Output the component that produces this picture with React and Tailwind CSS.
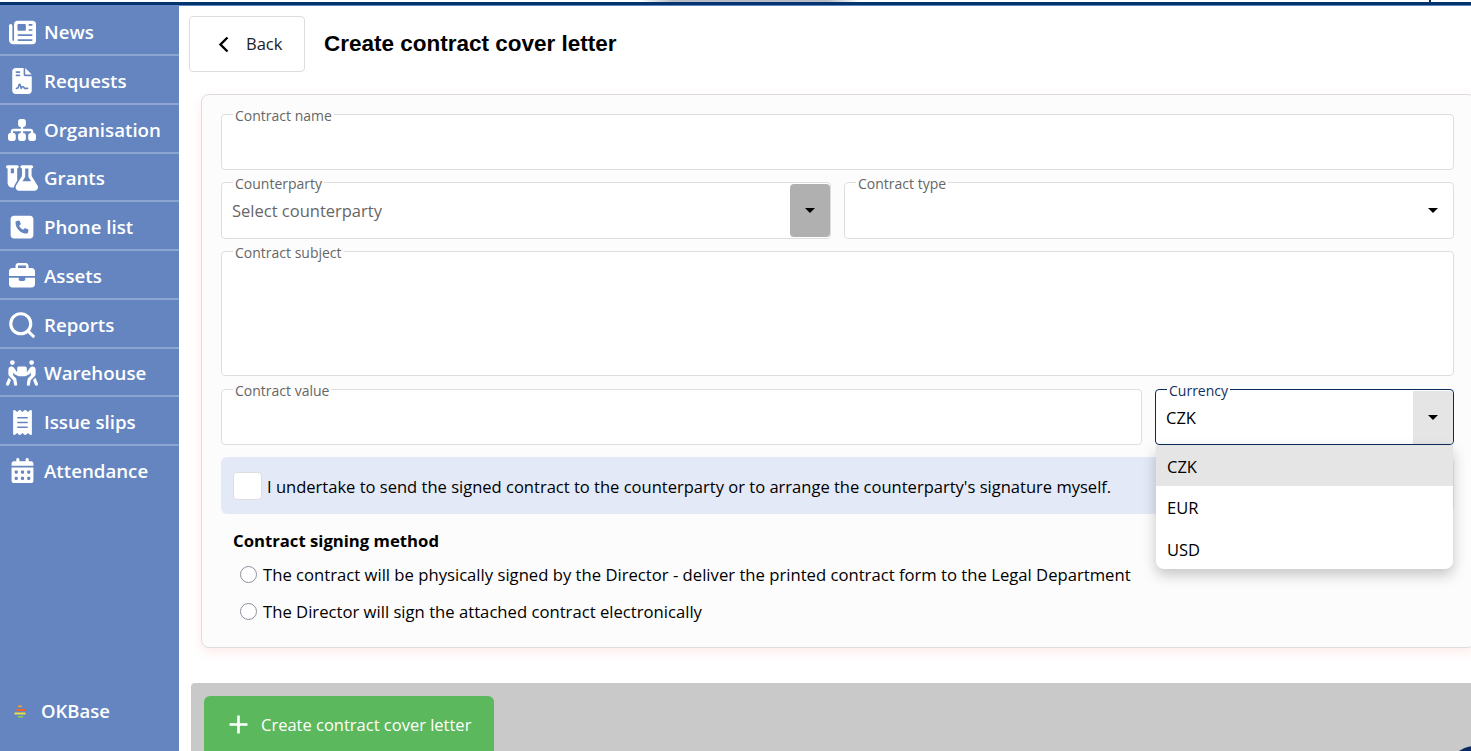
import React from 'react';
import { Search } from 'lucide-react';
import { FaNewspaper, FaFileContract, FaSitemap, FaBriefcase, FaPeopleCarryBox, FaReceipt, FaCalendarDays, FaFlaskVial, FaSquarePhone } from 'react-icons/fa6';

const SearchIcon = () => <Search size={30} strokeWidth={2.5} />;

const navItems = [
    { label: 'News', icon: FaNewspaper, size: 'text-[27px]' },
    { label: 'Requests', icon: FaFileContract, size: 'text-[26px]' },
    { label: 'Organisation', icon: FaSitemap, size: 'text-[28px]' },
    { label: 'Grants', icon: FaFlaskVial, size: 'text-[32px]' },
    { label: 'Phone list', icon: FaSquarePhone, size: 'text-[26px]' },
    { label: 'Assets', icon: FaBriefcase, size: 'text-[26px]' },
    { label: 'Reports', icon: SearchIcon, size: 'text-[25px]' },
    { label: 'Warehouse', icon: FaPeopleCarryBox, size: 'text-[32px]' },
    { label: 'Issue slips', icon: FaReceipt, size: 'text-[25px]' },
    { label: 'Attendance', icon: FaCalendarDays, size: 'text-[25px]' },
];

const Caret = () => (
    <svg width="10" height="5" viewBox="0 0 10 5" className="block">
        <path d="M0 0h10L5 5z" fill="#000" />
    </svg>
);

const Radio = () => <span className="h-[17px] w-[17px] shrink-0 rounded-full border border-[#8f8f9d] bg-white" />;

const Field = ({ label, className = '', active = false, children }) => (
    <fieldset className={`min-w-0 rounded border ${active ? 'border-[#0b2a5c]' : 'border-[#dedede]'} bg-white ${className}`}>
        <legend className={`ml-[11px] h-[16px] px-[2px] text-[14px] leading-[20px] ${active ? 'text-[#12305f]' : 'text-[#666]'}`}>{label}</legend>
        {children}
    </fieldset>
);

const Sidebar = () => (
    <aside className="flex h-full w-[179px] shrink-0 flex-col bg-[#6485bf] text-white">
        <nav className="flex flex-col pt-[1.25px]">
            {navItems.map(({ label, icon: Icon, size }) => (
                <div key={label} className="flex h-[48.75px] items-center border-b-2 border-[#8da5d1] pt-[3px] last:border-b-0 last:pb-[2px]">
                    <span className={`flex w-[44px] shrink-0 justify-center ${size}`}><Icon /></span>
                    <span className="text-[18.7px] font-semibold">{label}</span>
                </div>
            ))}
        </nav>
        <div className="mt-auto mb-[26px] flex items-center">
            <svg width="14" height="15" viewBox="0 0 14 15" className="ml-[14px] mr-[13px]">
                <rect x="4" y="1.5" width="4" height="1.5" fill="#f0a030" />
                <rect x="2.5" y="5" width="9" height="2" fill="#f0622a" />
                <rect x="0.5" y="8.5" width="11" height="2" fill="#e8e040" />
                <rect x="4" y="12" width="5" height="1.5" fill="#8cd050" />
            </svg>
            <span className="text-[18.5px] font-semibold">OKBase</span>
        </div>
    </aside>
);

export default function App() {
    return (
        <div className="flex h-screen w-full flex-col overflow-hidden bg-white font-['Open_Sans','Noto_Sans',sans-serif] text-black">
            <div className="flex h-[2px] shrink-0">
                <div className="w-[640px]" />
                <div className="h-full w-[220px] bg-[linear-gradient(90deg,#ffffff,#b9bcc4_15%,#b9bcc4_85%,#ffffff)]" />
                <div className="w-[569px]" />
                <div className="h-full w-[2px] bg-[#12305f]" />
            </div>
            <div className="h-[4px] shrink-0 border-b border-[#6485bf] bg-[#03346e]" />
            <div className="flex min-h-0 flex-1">
                <Sidebar />
                <main className="flex min-w-0 flex-1 flex-col">
                    <header className="flex items-center pt-[10px] pl-[10px]">
                        <button className="flex h-[56px] w-[116px] items-center rounded border border-[#ddd] pl-[28px] text-[16.5px] text-[#222]">
                            <svg width="11" height="17" viewBox="0 0 11 17" fill="none" stroke="#000" strokeWidth="2.4" className="mr-[17px]">
                                <path d="M9.5 1.5 2.5 8.5l7 7" />
                            </svg>
                            Back
                        </button>
                        <h1 className="ml-[19px] font-['Liberation_Sans',sans-serif] text-[22.5px] font-bold">Create contract cover letter</h1>
                    </header>

                    <section className="mt-[22px] -mr-[5px] ml-[22px] rounded-lg border border-[#ddd] bg-[#fcfcfc] pr-[21px] pb-[24px] pl-[19px] shadow-[0_4px_12px_rgba(255,190,190,0.3)]">
                        <div className="flex flex-col gap-[4px] pt-[11px]">
                            <Field label="Contract name" className="h-[64px]">
                                <input className="h-full w-full bg-transparent outline-none" />
                            </Field>
                            <div className="flex gap-[13px]">
                                <Field label="Counterparty" className="h-[65px] flex-1">
                                    <div className="-mt-[6px] flex h-[53px] items-center pl-[10px]">
                                        <span className="flex-1 pt-[1px] text-[16.5px] text-[#666]">Select counterparty</span>
                                        <span className="flex h-[53px] w-[40px] items-center justify-center rounded bg-[#b0b0b0]"><Caret /></span>
                                    </div>
                                </Field>
                                <Field label="Contract type" className="h-[65px] flex-1">
                                    <div className="-mt-[6px] flex h-[53px] items-center justify-end pr-[15px]"><Caret /></div>
                                </Field>
                            </div>
                            <Field label="Contract subject" className="mb-[1px] h-[133px]" />
                            <div className="flex gap-[13px]">
                                <Field label="Contract value" className="h-[64px] flex-1" />
                                <div className="relative w-[299px] shrink-0">
                                    <Field label="Currency" active className="h-[64px]">
                                        <div className="-mt-[6px] flex h-[53px] items-center pl-[10px]">
                                            <span className="flex-1 pt-[1px] text-[16.5px]">CZK</span>
                                            <span className="flex h-[53px] w-[40px] items-center justify-center rounded-r bg-[#e5e5e5]"><Caret /></span>
                                        </div>
                                    </Field>
                                    <ul className="absolute top-full right-[1px] left-[1px] z-10 overflow-hidden rounded-b-lg bg-white text-[16.5px] shadow-[0_6px_14px_rgba(0,0,0,0.22)]">
                                        <li className="flex h-[41px] items-center bg-[#e5e5e5] pt-[3px] pl-[11px]">CZK</li>
                                        <li className="flex h-[42px] items-center pt-[2px] pl-[11px]">EUR</li>
                                        <li className="flex h-[41px] items-center pt-[3px] pl-[11px]">USD</li>
                                    </ul>
                                </div>
                            </div>
                        </div>

                        <div className="mt-[12px] flex h-[57px] items-center rounded-md bg-[#e3e9f7] pl-[12px] text-[16.55px]">
                            <span className="h-[28px] w-[29px] shrink-0 rounded-sm border border-[#dedede] bg-white" />
                            <span className="ml-[5px] pt-[3px]">I undertake to send the signed contract to the counterparty or to arrange the counterparty's signature myself.</span>
                        </div>

                        <div className="mt-[15px] pl-[12px]">
                            <h2 className="text-[16.7px] leading-[24px] font-bold">Contract signing method</h2>
                            <div className="mt-[9px] flex flex-col gap-[13px] pl-[7px] text-[16.67px]">
                                <label className="flex h-[24px] items-center gap-[6px] whitespace-nowrap">
                                    <Radio />
                                    <span className="pt-[1px]">The contract will be physically signed by the Director - deliver the printed contract form to the Legal Department</span>
                                </label>
                                <label className="flex h-[24px] items-center gap-[6px] whitespace-nowrap">
                                    <Radio />
                                    <span className="pt-[1px]">The Director will sign the attached contract electronically</span>
                                </label>
                            </div>
                        </div>
                    </section>

                    <footer className="relative mt-auto ml-[12px] h-[68px] overflow-hidden rounded-tl-sm bg-[#c9c9c9] pt-[13px] pl-[13px]">
                        <button className="flex h-[62px] w-[290px] items-start rounded-md bg-[#5cb85c] pt-[17px] pl-[25px] text-[16.5px] text-white">
                            <svg width="19" height="19" viewBox="0 0 19 19" fill="none" stroke="#fff" strokeWidth="2.6" className="mt-[2px] mr-[13px]">
                                <path d="M9.5 0.5v18M0.5 9.5h18" />
                            </svg>
                            Create contract cover letter
                        </button>
                        <div className="absolute top-[63px] -right-[28px] h-[50px] w-[50px] rounded-full bg-[#0a2a66]" />
                    </footer>
                </main>
            </div>
        </div>
    );
}
